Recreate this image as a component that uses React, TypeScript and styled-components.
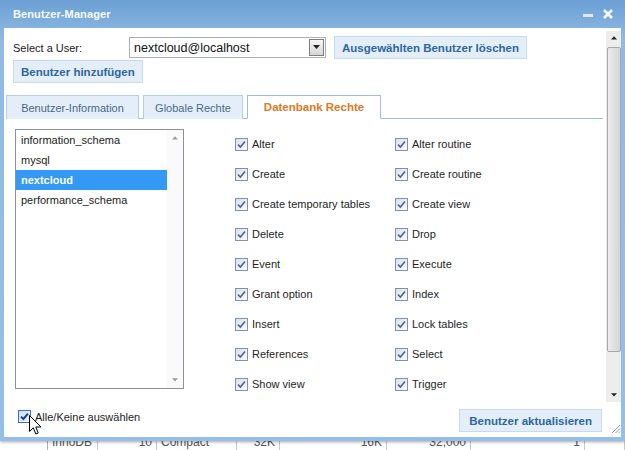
import styled, { createGlobalStyle } from "styled-components";

const GlobalStyle = createGlobalStyle`
  html, body {
    margin: 0;
    padding: 0;
  }
  body {
    width: 625px;
    height: 450px;
    overflow: hidden;
    background: #ffffff;
    font-family: "Liberation Sans", Arial, sans-serif;
    font-size: 11px;
    color: #1e1e1e;
  }
`;

const databases = ["information_schema", "mysql", "nextcloud", "performance_schema"];

const rights: [string, string][] = [
  ["Alter", "Alter routine"],
  ["Create", "Create routine"],
  ["Create temporary tables", "Create view"],
  ["Delete", "Drop"],
  ["Event", "Execute"],
  ["Grant option", "Index"],
  ["Insert", "Lock tables"],
  ["References", "Select"],
  ["Show view", "Trigger"],
];

const tabs = [
  { label: "Benutzer-Information", width: 133 },
  { label: "Globale Rechte", width: 100 },
  { label: "Datenbank Rechte", width: 134, active: true },
];

const bgCells = [
  { w: 48, text: "" },
  { w: 50, text: "InnoDB" },
  { w: 59, text: "10", right: true },
  { w: 80, text: "Compact" },
  { w: 43, text: "32K", right: true },
  { w: 107, text: "16K", right: true },
  { w: 84, text: "32,000", right: true },
  { w: 114, text: "1", right: true },
  { w: 40, text: "" },
];

const CheckMark = ({ hot }: { hot?: boolean }) => (
  <svg width="9" height="9" viewBox="0 0 9 9">
    <path
      d="M1 4.6 L3.4 7 L8 1.6"
      fill="none"
      stroke={hot ? "#1b3c9e" : "#4c6393"}
      strokeWidth={hot ? 2 : 1.6}
    />
  </svg>
);

const Cursor = () => (
  <svg width="13" height="21" viewBox="0 0 13 21">
    <path
      d="M0.5 0.5 L0.5 16.5 L4.3 12.8 L6.8 19 L9.2 18 L6.8 12 L12 12 Z"
      fill="#ffffff"
      stroke="#000000"
      strokeWidth="1"
      strokeLinejoin="round"
    />
  </svg>
);

const Triangle = ({ down, size = 7 }: { down?: boolean; size?: number }) => (
  <svg width={size} height={size / 2 + 1} viewBox="0 0 8 5">
    <path d={down ? "M0 0 L8 0 L4 4.5 Z" : "M0 4.5 L8 4.5 L4 0 Z"} fill="#222" />
  </svg>
);

const App = () => {
  return (
    <>
      <GlobalStyle />
      <Window>
        <TitleBar>
          <span>Benutzer-Manager</span>
          <WindowControls>
            <MinimizeBar />
            <svg width="10" height="10" viewBox="0 0 10 10">
              <path d="M1 1 L9 9 M9 1 L1 9" stroke="#f4f8fc" strokeWidth="2.6" />
            </svg>
          </WindowControls>
        </TitleBar>

        <Content>
          <ScrollArea>
            <Main>
              <Form>
                <FormRow>
                  <Label>Select a User:</Label>
                  <Select>
                    <span>nextcloud@localhost</span>
                    <DropButton>
                      <Triangle down />
                    </DropButton>
                  </Select>
                  <Button>Ausgewählten Benutzer löschen</Button>
                </FormRow>
                <FormRow>
                  <Button>Benutzer hinzufügen</Button>
                </FormRow>
              </Form>

              <Tabs>
                {tabs.map((t) => (
                  <Tab key={t.label} $width={t.width} $active={t.active}>
                    {t.label}
                  </Tab>
                ))}
              </Tabs>

              <TabPane>
                <ListBox>
                  <ListItems>
                    {databases.map((db) => (
                      <ListItem key={db} $selected={db === "nextcloud"}>
                        {db}
                      </ListItem>
                    ))}
                  </ListItems>
                  <ListScroll>
                    <Triangle size={6} />
                    <Triangle size={6} down />
                  </ListScroll>
                </ListBox>

                <RightsGrid>
                  {rights.flat().map((r) => (
                    <CheckRow key={r}>
                      <Box>
                        <CheckMark />
                      </Box>
                      <span>{r}</span>
                    </CheckRow>
                  ))}
                </RightsGrid>
              </TabPane>
            </Main>

            <ScrollBar>
              <ScrollArrow>
                <Triangle size={6} />
              </ScrollArrow>
              <Thumb />
              <ScrollArrow>
                <Triangle size={6} down />
              </ScrollArrow>
            </ScrollBar>
          </ScrollArea>

          <Footer>
            <FooterCheck>
              <Box $hot>
                <CheckMark hot />
              </Box>
              <span>Alle/Keine auswählen</span>
            </FooterCheck>
            <Button $wide>Benutzer aktualisieren</Button>
          </Footer>
        </Content>

        <CursorLayer>
          <Cursor />
        </CursorLayer>
        <Grip>
          <svg width="10" height="10" viewBox="0 0 10 10">
            <path d="M9 1 L1 9 M9 4.5 L4.5 9 M9 7.5 L7.5 9" stroke="#9a9a9a" strokeWidth="1" />
          </svg>
        </Grip>
      </Window>

      <BgStrip>
        <BgRow>
          {bgCells.map((c, i) => (
            <BgCell key={i} $w={c.w} $right={c.right}>
              {c.text}
            </BgCell>
          ))}
        </BgRow>
      </BgStrip>
    </>
  );
};

const Window = styled.div`
  position: relative;
  width: 625px;
  height: 441px;
  box-sizing: border-box;
  display: flex;
  flex-direction: column;
  padding: 0 4px 4px 4px;
  background: linear-gradient(#6c9fd4, #8fbbe4 40px, #94bfe6);
  box-shadow: 0 1px 3px rgba(0, 0, 0, 0.35);
  z-index: 1;
`;

const TitleBar = styled.div`
  height: 28px;
  flex: none;
  display: flex;
  align-items: center;
  justify-content: space-between;
  padding: 0 8px 0 9px;
  color: #f7fbff;
  font-weight: bold;
  font-size: 11px;
  letter-spacing: 0.1px;
`;

const WindowControls = styled.div`
  display: flex;
  align-items: center;
  gap: 10px;
`;

const MinimizeBar = styled.div`
  width: 10px;
  height: 3px;
  margin-top: 3px;
  background: #dce9f6;
`;

const Content = styled.div`
  flex: 1;
  background: #ffffff;
  display: flex;
  flex-direction: column;
  min-height: 0;
`;

const ScrollArea = styled.div`
  height: 374px;
  display: flex;
`;

const Main = styled.div`
  flex: 1;
  padding: 8px 3px 0 2px;
  min-width: 0;
`;

const Form = styled.div`
  padding-left: 7px;
  display: flex;
  flex-direction: column;
  gap: 1px;
`;

const FormRow = styled.div`
  display: flex;
  align-items: center;
`;

const Label = styled.span`
  width: 116px;
  color: #1a1a1a;
`;

const Select = styled.div`
  width: 197px;
  height: 21px;
  box-sizing: border-box;
  border: 1px solid #a9afb7;
  display: flex;
  align-items: center;
  justify-content: space-between;
  padding: 0 1px 0 4px;
  font-size: 12.5px;
  color: #111;
  margin-right: 8px;
`;

const DropButton = styled.div`
  width: 15px;
  height: 17px;
  box-sizing: border-box;
  border: 1px solid #7d7d7d;
  background: linear-gradient(#f6f6f6, #d6d6d6);
  display: flex;
  align-items: center;
  justify-content: center;
`;

const Button = styled.div<{ $wide?: boolean }>`
  height: 23px;
  box-sizing: border-box;
  display: inline-flex;
  align-items: center;
  padding: 0 ${(p) => (p.$wide ? 9 : 7)}px;
  background: #e3eef9;
  border: 1px solid #c5dbee;
  color: #2f679e;
  font-weight: bold;
  font-size: 11.5px;
`;

const Tabs = styled.div`
  margin-top: 12px;
  display: flex;
  gap: 4px;
  border-bottom: 1px solid #9dbedc;
  height: 23px;
`;

const Tab = styled.div<{ $active?: boolean; $width: number }>`
  width: ${(p) => p.$width}px;
  height: 24px;
  box-sizing: border-box;
  display: flex;
  align-items: center;
  justify-content: center;
  border: 1px solid ${(p) => (p.$active ? "#9dbedc" : "#b5cfe6")};
  border-bottom: ${(p) => (p.$active ? "1px solid #ffffff" : "none")};
  background: ${(p) => (p.$active ? "#ffffff" : "#e4eef8")};
  color: ${(p) => (p.$active ? "#e0781d" : "#48698a")};
  font-weight: ${(p) => (p.$active ? "bold" : "normal")};
  font-size: ${(p) => (p.$active ? "11.5px" : "11px")};
`;

const TabPane = styled.div`
  display: flex;
  padding: 10px 0 0 9px;
`;

const ListBox = styled.div`
  width: 169px;
  height: 260px;
  box-sizing: border-box;
  border: 1px solid #8a9099;
  display: flex;
`;

const ListItems = styled.div`
  flex: 1;
`;

const ListItem = styled.div<{ $selected?: boolean }>`
  height: 20px;
  line-height: 20px;
  padding-left: 5px;
  background: ${(p) => (p.$selected ? "#3399f5" : "transparent")};
  color: ${(p) => (p.$selected ? "#ffffff" : "#1a1a1a")};
  font-weight: ${(p) => (p.$selected ? "bold" : "normal")};
`;

const ListScroll = styled.div`
  width: 16px;
  background: #f4f4f4;
  display: flex;
  flex-direction: column;
  align-items: center;
  justify-content: space-between;
  padding: 6px 0 6px;
  opacity: 0.45;
`;

const RightsGrid = styled.div`
  margin-left: 51px;
  display: grid;
  grid-template-columns: 160px 160px;
  grid-auto-rows: 30px;
`;

const CheckRow = styled.div`
  display: flex;
  align-items: center;
  gap: 4px;
  color: #1e1e1e;
`;

const Box = styled.div<{ $hot?: boolean }>`
  width: 13px;
  height: 13px;
  box-sizing: border-box;
  border: 1px solid ${(p) => (p.$hot ? "#3e6fc0" : "#8092ab")};
  background: ${(p) =>
    p.$hot
      ? "linear-gradient(135deg, #c9e0f7, #f2f8fe)"
      : "linear-gradient(135deg, #d9e1ea, #fbfcfd)"};
  display: flex;
  align-items: center;
  justify-content: center;
`;

const ScrollBar = styled.div`
  width: 15px;
  margin-top: 3px;
  background: #ededed;
  display: flex;
  flex-direction: column;
`;

const ScrollArrow = styled.div`
  height: 14px;
  display: flex;
  align-items: center;
  justify-content: center;
`;

const Thumb = styled.div`
  height: 303px;
  margin: 2px 0 auto 1px;
  border: 1px solid #a8a8a8;
  border-radius: 2px;
  background: linear-gradient(to right, #ececec, #d5d5d5);
`;

const Footer = styled.div`
  flex: 1;
  display: flex;
  align-items: flex-start;
  justify-content: space-between;
  padding: 7px 19px 0 14px;
`;

const FooterCheck = styled.div`
  display: flex;
  align-items: center;
  gap: 4px;
  margin-top: 1px;
  color: #1e1e1e;
`;

const CursorLayer = styled.div`
  position: absolute;
  left: 29px;
  top: 415px;
  z-index: 3;
`;

const Grip = styled.div`
  position: absolute;
  right: 4px;
  bottom: 5px;
  z-index: 2;
`;

const BgStrip = styled.div`
  height: 9px;
  overflow: hidden;
  background: #ffffff;
`;

const BgRow = styled.div`
  display: flex;
  margin-top: -8px;
`;

const BgCell = styled.div<{ $w: number; $right?: boolean }>`
  width: ${(p) => p.$w}px;
  box-sizing: border-box;
  height: 18px;
  line-height: 18px;
  border-right: 1px solid #c9c9c9;
  padding: 0 4px;
  text-align: ${(p) => (p.$right ? "right" : "left")};
  font-size: 12px;
  color: #555;
  &:first-child {
    border-right-color: #b0b0b0;
  }
`;

export default App;
